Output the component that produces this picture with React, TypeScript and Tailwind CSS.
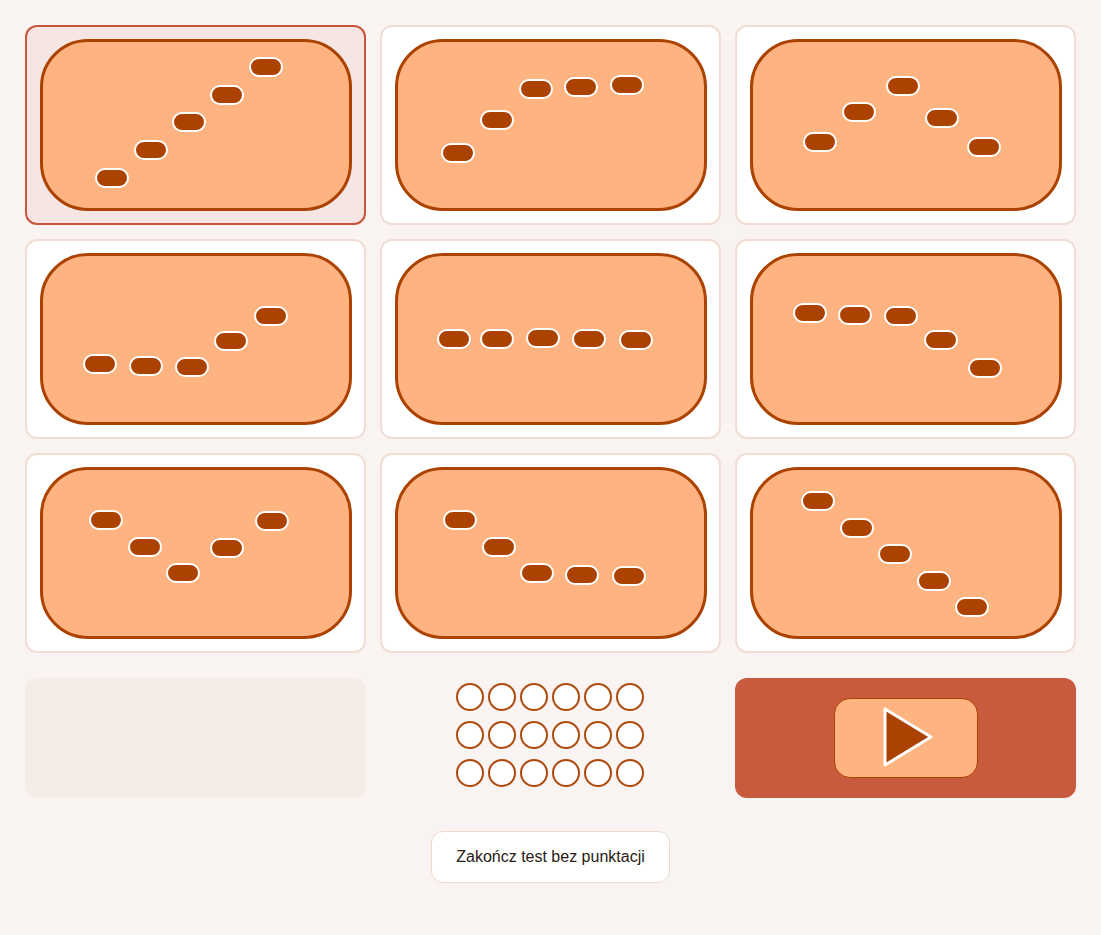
import React from 'react';

type Dot = [number, number];

// dot centres, relative to the top-left of the orange pill (312x172)
const patterns: Dot[][] = [
  [[72, 139], [111, 111], [149, 83], [187, 56], [226, 28]],
  [[63, 114], [102, 81], [141, 50], [186, 48], [232, 46]],
  [[70, 103], [109, 73], [153, 47], [192, 79], [234, 108]],
  [[60, 111], [106, 113], [152, 114], [191, 88], [231, 63]],
  [[59, 86], [102, 86], [148, 85], [194, 86], [241, 87]],
  [[60, 60], [105, 62], [151, 63], [191, 87], [235, 115]],
  [[66, 53], [105, 80], [143, 106], [187, 81], [232, 54]],
  [[65, 53], [104, 80], [142, 106], [187, 108], [234, 109]],
  [[68, 34], [107, 61], [145, 87], [184, 114], [222, 140]],
];

function PatternCard({ dots, selected }: { dots: Dot[]; selected?: boolean }) {
  return (
    <div
      className={
        'h-[200px] rounded-xl border-2 flex items-center justify-center ' +
        (selected ? 'bg-[#f6e6e3] border-[#c8553d]' : 'bg-white border-[#f1ddd3]')
      }
    >
      <div className="w-[312px] h-[172px] rounded-[48px] border-[3px] border-[#ab4200] bg-[#ffb381]">
        <svg width="306" height="166" viewBox="3 3 306 166">
          {dots.map(([x, y], i) => (
            <rect
              key={i}
              x={x - 16}
              y={y - 9}
              width={32}
              height={18}
              rx={9}
              fill="#ab4200"
              stroke="#fff"
              strokeWidth={2}
            />
          ))}
        </svg>
      </div>
    </div>
  );
}

export default function App() {
  return (
    <div className="min-h-screen bg-[#f9f3f1] px-[25px] pt-[25px] font-['Liberation_Sans',Arial,sans-serif]">
      <div className="grid grid-cols-3 gap-[14px]">
        {patterns.map((p, i) => (
          <PatternCard key={i} dots={p} selected={i === 0} />
        ))}
      </div>

      <div className="grid grid-cols-3 gap-[14px] mt-[25px]">
        <div className="h-[120px] rounded-xl bg-[#f3ece7]"></div>
        <div className="h-[120px] flex items-start justify-center pt-[5px]">
          <div className="grid grid-cols-6 gap-x-1 gap-y-[10px] -ml-[2px]">
            {Array.from({ length: 18 }).map((_, i) => (
              <div key={i} className="w-[28px] h-[28px] rounded-full border-2 border-[#b04a0e] bg-white"></div>
            ))}
          </div>
        </div>
        <div className="h-[120px] rounded-xl bg-[#c85b3e] flex items-center justify-center">
          <button className="w-[144px] h-[80px] rounded-2xl border border-[#ab4200] bg-[#ffb381] flex items-center justify-center">
            <svg width="62" height="62" viewBox="0 0 62 62">
              <polygon points="10,2 56,30 10,58" fill="#ab4200" stroke="#fff" strokeWidth="3" strokeLinejoin="round" />
            </svg>
          </button>
        </div>
      </div>

      <div className="flex justify-center mt-[33px]">
        <button className="w-[239px] h-[52px] rounded-xl border border-[#eed8cc] bg-white text-[16px] text-[#2a1a14]">
          Zakończ test bez punktacji
        </button>
      </div>
    </div>
  );
}
